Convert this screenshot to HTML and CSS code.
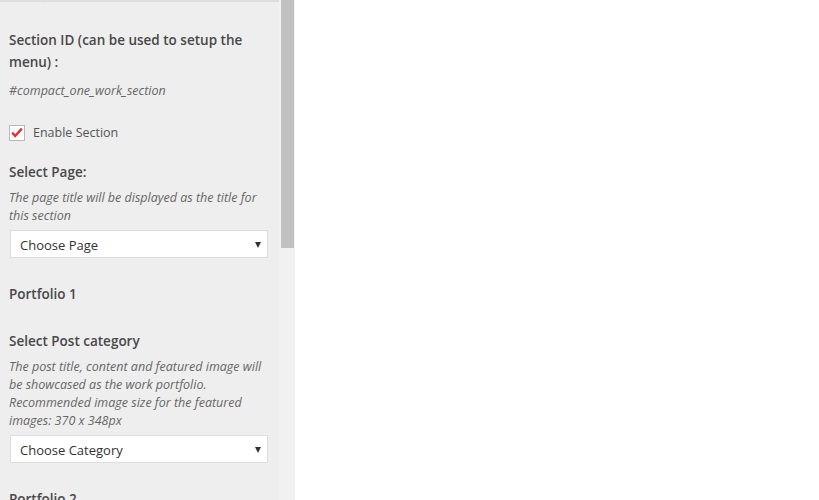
FILE: index.html
```html
<!doctype html>
<html>
<head>
<meta charset="utf-8">
<title>Customizer</title>
<link rel="stylesheet" href="styles.css">
</head>

<body>
<div class="wrap">
	<div class="panel">
		<div class="tabs"><span class="tab"></span></div>
		<div class="inner">
			<div class="ctrl">
				<h4 class="title">Section ID (can be used to setup the menu) :</h4>
				<p class="desc id">#compact_one_work_section</p>
			</div>
			<div class="ctrl ctrl-check">
				<label class="check"><span class="box"><svg width="14" height="14" viewBox="0 0 14 14"><path d="M2.2 6.6 L5.2 10 L11.8 2.6" fill="none" stroke="#dd3333" stroke-width="2.4"/></svg></span>Enable Section</label>
			</div>
			<div class="ctrl ctrl-page">
				<h4 class="title">Select Page:</h4>
				<p class="desc">The page title will be displayed as the title for this section</p>
				<div class="select">Choose Page<span class="arrow"></span></div>
			</div>
			<div class="ctrl ctrl-group">
				<h4 class="title">Portfolio 1</h4>
			</div>
			<div class="ctrl ctrl-cat">
				<h4 class="title">Select Post category</h4>
				<p class="desc">The post title, content and featured image will be showcased as the work portfolio. Recommended image size for the featured images: 370 x 348px</p>
				<div class="select">Choose Category<span class="arrow"></span></div>
			</div>
			<div class="ctrl ctrl-group last">
				<h4 class="title">Portfolio 2</h4>
			</div>
		</div>
	</div>
	<div class="track"><div class="thumb"></div></div>
	<div class="preview"></div>
</div>
</body>
</html>
```

FILE: styles.css
```css
*{ margin:0; padding:0; box-sizing:border-box;}
body{ font-family:"Open Sans","Noto Sans",sans-serif; color:#444; background:#fff;}

.wrap{ display:flex; height:500px; overflow:hidden;}
.panel{ width:279px; background:#eee; flex-shrink:0; overflow:hidden;}
.tabs{ height:3px; border-top:2px solid #ddd; display:flex;}
.tabs .tab{ width:44px; border-right:1px solid #ddd; height:1px;}
.inner{ padding:26px 11px 0 9px;}

.ctrl-check{ padding-top:24px;}
.ctrl-page{ padding-top:19px;}
.ctrl-group{ padding:25px 0 25px;}
.ctrl-group.last{ padding-top:25px;}

.title{ font-size:13.5px; font-weight:600; line-height:22px; color:#484848;}
.desc{ font-size:12.5px; font-style:italic; line-height:18px; color:#666; margin-top:6px;}
.desc.id{ margin-top:9px;}

.check{ display:flex; align-items:center; font-size:12.5px; color:#555; line-height:18px;}
.check .box{ width:16px; height:16px; border:1px solid #b4b9be; background:#fff; margin-right:8px; display:flex; align-items:center; justify-content:center;}

.select{ margin:5px 0 0 1px; height:28px; background:#fff; border:1px solid #ddd; font-size:13px; line-height:28px; padding:0 9px; color:#333; position:relative;}
.select .arrow{ position:absolute; right:6px; top:11px; border-left:3.5px solid transparent; border-right:3.5px solid transparent; border-top:6px solid #333;}

.track{ width:16px; background:#f1f1f1; flex-shrink:0; padding:0 1px 0 2px;}
.thumb{ height:248px; background:#c1c1c1;}
.preview{ flex:1; background:#fff;}
```
